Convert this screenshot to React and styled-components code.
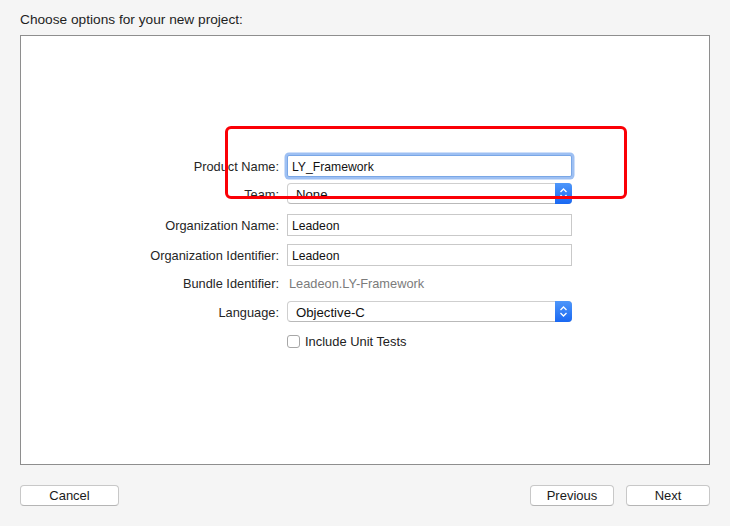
import React from "react";
import styled, { createGlobalStyle } from "styled-components";

const Global = createGlobalStyle`
  html, body { margin: 0; padding: 0; background: #f5f5f5; }
  body { font-family: "Liberation Sans", Arial, sans-serif; color: #222; }
`;

const Page = styled.div`
  position: relative;
  width: 730px;
  height: 526px;
  box-sizing: border-box;
  padding: 11px 20px 0 20px;
  display: flex;
  flex-direction: column;
  background: #f5f5f5;
`;

const Title = styled.div`
  font-size: 13.7px;
  line-height: 17px;
  color: #1e1e1e;
`;

const Panel = styled.div`
  margin-top: 7px;
  height: 430px;
  box-sizing: border-box;
  border: 1px solid #8e8e8e;
  background: #ffffff;
  padding-top: 119px;
  display: flex;
  flex-direction: column;
`;

const Row = styled.div`
  display: grid;
  grid-template-columns: 258px 285px;
  column-gap: 8px;
  align-items: center;
  height: ${(p) => p.$h}px;
  margin-top: ${(p) => p.$top || 0}px;
`;

const Label = styled.div`
  text-align: right;
  font-size: 12.8px;
  line-height: 16px;
  padding-top: 2px;
  color: #262626;
  white-space: nowrap;
`;

const TextField = styled.div`
  height: 22px;
  box-sizing: border-box;
  border: 1px solid ${(p) => (p.$focus ? "#7aa7e6" : "#c9c9c9")};
  box-shadow: ${(p) => (p.$focus ? "0 0 0 2.5px #9ec0f3" : "none")};
  border-radius: ${(p) => (p.$focus ? "2px" : "0")};
  background: #fff;
  font-size: 12.2px;
  line-height: 22px;
  padding-left: 4px;
  color: #111;
`;

const Popup = styled.div`
  position: relative;
  height: 21px;
  box-sizing: border-box;
  border: 1px solid #cfcfcf;
  border-bottom-color: #b9b9b9;
  border-radius: 4px;
  background: #fff;
  font-size: 13.2px;
  color: #111;
  padding-left: 8px;
  display: flex;
  align-items: center;
  justify-content: space-between;
`;

const PopupText = styled.span`
  padding-top: 2px;
`;

const Stepper = styled.div`
  width: 17px;
  height: 21px;
  margin: -1px -1px -1px 0;
  border-radius: 0 4px 4px 0;
  background: linear-gradient(#4e97fa, #1a68f2);
  display: flex;
  align-items: center;
  justify-content: center;
`;

const Plain = styled.div`
  font-size: 12.8px;
  line-height: 16px;
  padding-top: 2px;
  color: #7b7b7b;
  padding-left: 2px;
`;

const CheckLabel = styled.label`
  display: flex;
  align-items: center;
  gap: 5px;
  font-size: 12.9px;
  color: #222;
`;

const Box = styled.span`
  width: 13px;
  height: 13px;
  box-sizing: border-box;
  border: 1px solid #a7a7a7;
  border-radius: 3px;
  background: #fff;
`;

const Footer = styled.div`
  margin-top: 20px;
  display: flex;
  align-items: center;
`;

const Button = styled.div`
  width: ${(p) => p.$w}px;
  height: 21px;
  box-sizing: border-box;
  border: 1px solid #c8c8c8;
  border-bottom-color: #b5b5b5;
  border-radius: 4px;
  background: #fff;
  font-size: 13px;
  line-height: 19px;
  text-align: center;
  color: #1a1a1a;
  margin-left: ${(p) => p.$ml || 0}px;
`;

const Spacer = styled.div`
  flex: 1;
`;

const Annotation = styled.div`
  position: absolute;
  left: 225px;
  top: 126px;
  width: 402px;
  height: 73px;
  box-sizing: border-box;
  border: 3px solid #fb0006;
  border-radius: 6px;
  pointer-events: none;
`;

const Chevrons = () => (
  <svg width="9" height="13" viewBox="0 0 9 13">
    <path d="M1.5 5 L4.5 2 L7.5 5" fill="none" stroke="#fff" strokeWidth="1.3" />
    <path d="M1.5 8 L4.5 11 L7.5 8" fill="none" stroke="#fff" strokeWidth="1.3" />
  </svg>
);

export default function App() {
  return (
    <>
      <Global />
      <Page>
        <Title>Choose options for your new project:</Title>
        <Panel>
          <Row $h={22}>
            <Label>Product Name:</Label>
            <TextField $focus>LY_Framework</TextField>
          </Row>
          <Row $h={21} $top={6}>
            <Label>Team:</Label>
            <Popup>
              <PopupText>None</PopupText>
              <Stepper>
                <Chevrons />
              </Stepper>
            </Popup>
          </Row>
          <Row $h={22} $top={10}>
            <Label>Organization Name:</Label>
            <TextField>Leadeon</TextField>
          </Row>
          <Row $h={22} $top={8}>
            <Label>Organization Identifier:</Label>
            <TextField>Leadeon</TextField>
          </Row>
          <Row $h={16} $top={8}>
            <Label>Bundle Identifier:</Label>
            <Plain>Leadeon.LY-Framework</Plain>
          </Row>
          <Row $h={21} $top={11}>
            <Label>Language:</Label>
            <Popup>
              <PopupText>Objective-C</PopupText>
              <Stepper>
                <Chevrons />
              </Stepper>
            </Popup>
          </Row>
          <Row $h={17} $top={11}>
            <span />
            <CheckLabel>
              <Box />
              Include Unit Tests
            </CheckLabel>
          </Row>
        </Panel>
        <Footer>
          <Button $w={99}>Cancel</Button>
          <Spacer />
          <Button $w={84}>Previous</Button>
          <Button $w={84} $ml={12}>Next</Button>
        </Footer>
        <Annotation />
      </Page>
    </>
  );
}
